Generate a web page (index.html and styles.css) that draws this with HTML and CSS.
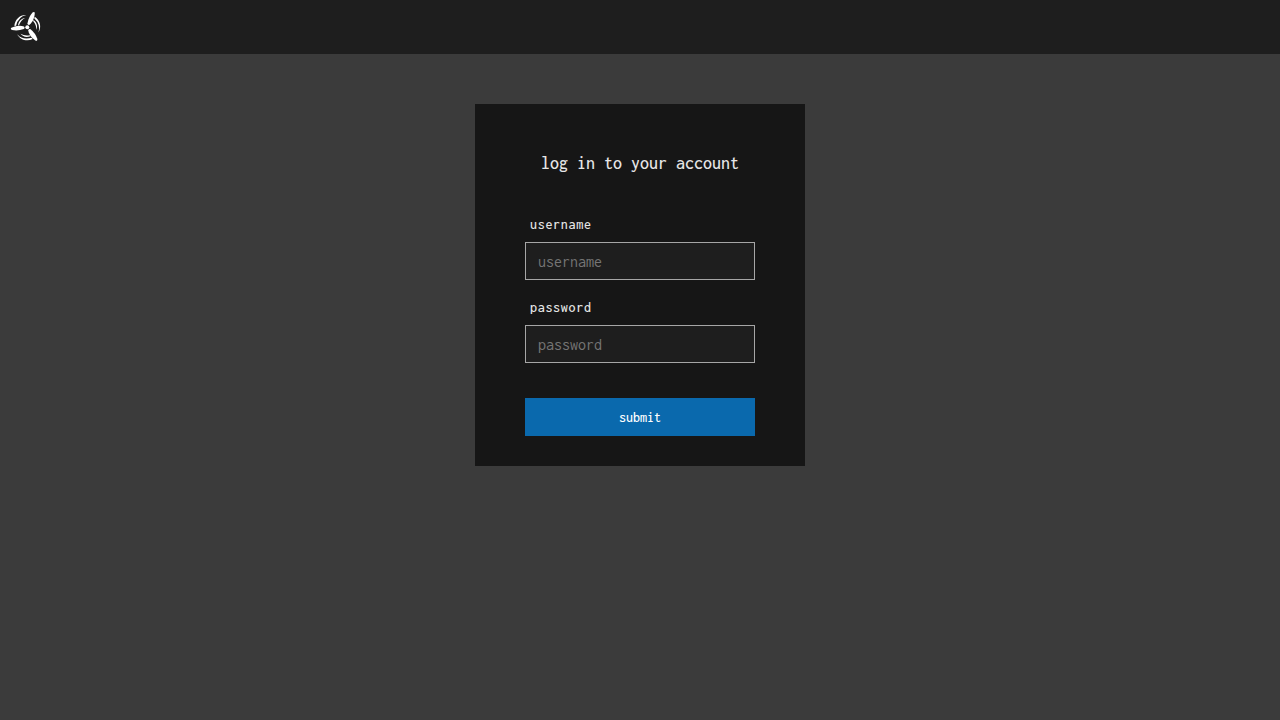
FILE: index.html
```html
<!DOCTYPE html>
<html lang="en">
<head>
<meta charset="utf-8">
<title>log in</title>
<link rel="stylesheet" href="styles.css">
</head>
<body>
<header class="topbar">
  <svg class="logo" viewBox="0 0 32 32" fill="#fff">
    <defs>
      <g id="blade">
        <path d="M.9 18C4 16.4 9 14.6 14 16.4Q15.6 17.9 13.8 19Q8 21.2 2 20Q.4 19.4 .9 18Z"/>
        <path d="M4.4 16C4.8 9.5 10 4.6 16.3 5Q8.2 6.6 6.1 15.7Z"/>
        <path d="M8 15.4C8.5 11.2 11.3 8.4 15 8Q10.7 10.4 9 15.3Z"/>
      </g>
    </defs>
    <use href="#blade"/>
    <use href="#blade" transform="rotate(120 17.3 17.2)"/>
    <use href="#blade" transform="rotate(240 17.3 17.2)"/>
    <circle cx="17.3" cy="17.2" r="2"/>
  </svg>
</header>
<main class="page">
  <form class="login">
    <h1 class="title">log in to your account</h1>
    <label class="label" for="username">username</label>
    <input class="field" id="username" type="text" placeholder="username">
    <label class="label" for="password">password</label>
    <input class="field" id="password" type="password" placeholder="password">
    <button class="submit" type="button">submit</button>
  </form>
</main>
</body>
</html>
```
FILE: styles.css
```css
* { box-sizing: border-box; }
body {
  margin: 0;
  min-height: 100vh;
  background: #3b3b3b;
  color: #e6e6e6;
  font-family: Inconsolata, "DejaVu Sans Mono", monospace;
}
.topbar {
  height: 54px;
  padding: 10px;
  background: #1e1e1e;
}
.logo { display: block; width: 32px; height: 32px; }
.page { display: flex; justify-content: center; padding-top: 50px; }
.login {
  display: flex;
  flex-direction: column;
  width: 330px;
  height: 362px;
  padding: 50px 50px 30px;
  background: #161616;
}
.title {
  margin: 0 0 50px;
  font-size: 18px;
  line-height: 18px;
  font-weight: 500;
  text-align: center;
  white-space: nowrap;
}
.label {
  height: 14px;
  margin: -4px 0 10px 5px;
  font-size: 14px;
  line-height: 14px;
  font-weight: 500;
  letter-spacing: 0.7px;
}
.field {
  width: 230px;
  height: 38px;
  margin: 0 0 25px;
  padding: 1px 12px 0;
  border: 1px solid #a6a6a6;
  border-radius: 0;
  outline: 0;
  background: #1e1e1e;
  color: #e6e6e6;
  font: 16px Inconsolata, "DejaVu Sans Mono", monospace;
}
.field::placeholder { color: #757575; }
.submit {
  height: 38px;
  margin-top: 10px;
  padding: 0;
  border: 0;
  background: #0a69ad;
  color: #fff;
  font: 500 14px Inconsolata, "DejaVu Sans Mono", monospace;
}
```
